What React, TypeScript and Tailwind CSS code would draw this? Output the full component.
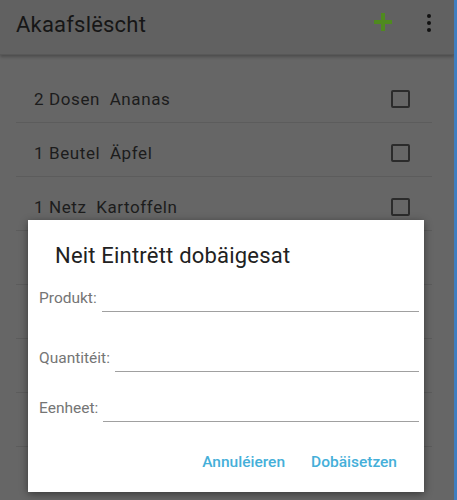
import React from 'react';

// Einkaafslëscht – Dialog "Neit Eintrëtt" iwwer der gedimmter Lëscht
const ITEMS = ['2 Dosen  Ananas', '1 Beutel  Äpfel', '1 Netz  Kartoffeln', '', '', '', ''];

function PlusIcon() {
  return (
    <svg width="20" height="20" viewBox="0 0 20 20">
      <path d="M10 1v18M1 10h18" stroke="#4f8a1f" strokeWidth="4" />
    </svg>
  );
}

function Field({ label, height }: { label: string; height: string }) {
  return (
    <div className={`flex items-end pl-[11px] pr-[5px] ${height}`}>
      <span className="mb-[4px] text-[15.5px] leading-[20px] text-[#757575]">{label}</span>
      <div className="ml-[5px] flex-1 border-b border-[#a0a0a0]" />
    </div>
  );
}

export default function App() {
  return (
    <div className="relative flex h-[500px] w-[457px] overflow-hidden bg-[#666666] font-[Roboto,sans-serif]">
      <div className="flex flex-1 flex-col">
        {/* Toolbar */}
        <header className="flex h-[55px] items-start border-b border-[#585858] bg-[#616161] pl-[16px] pt-[11px] shadow-[0_2px_3px_rgba(0,0,0,0.25)]">
          <h1 className="flex-1 text-[22px] leading-[28px] tracking-[0.2px] text-[#161616]">Akaafslëscht</h1>
          <div className="mr-[34px] mt-[1px]">
            <PlusIcon />
          </div>
          <div className="mr-[23px] mt-[3px] flex flex-col items-center gap-[3px]">
            <span className="h-[4px] w-[4px] rounded-full bg-[#111]" />
            <span className="h-[4px] w-[4px] rounded-full bg-[#111]" />
            <span className="h-[4px] w-[4px] rounded-full bg-[#111]" />
          </div>
        </header>

        {/* Lëscht */}
        <ul className="ml-[16px] mr-[22px] mt-[14px]">
          {ITEMS.map((item, i) => (
            <li
              key={i}
              className="flex h-[54px] items-center border-b border-[#5c5c5c] pl-[18px] pr-[22px] pt-[6px]"
            >
              <span className="flex-1 whitespace-pre text-[17px] leading-[24px] tracking-[0.6px] text-[#1c1c1c]">
                {item}
              </span>
              <span className="h-[18px] w-[19px] rounded-[2px] border-2 border-[#2b2b2b]" />
            </li>
          ))}
        </ul>
      </div>
      <div className="w-[3px] bg-[#3f7ec0]" />

      {/* Dialog */}
      <div className="absolute left-[28px] top-[220px] flex h-[272px] w-[396px] flex-col bg-white shadow-[0_2px_8px_rgba(0,0,0,0.45)]">
        <h2 className="pl-[27px] pt-[22px] text-[22px] leading-[28px] tracking-[0.2px] text-[#212121]">
          Neit Eintrëtt dobäigesat
        </h2>
        <Field label="Produkt:" height="h-[42px]" />
        <Field label="Quantitéit:" height="h-[60px]" />
        <Field label="Eenheet:" height="h-[50px]" />
        <div className="flex justify-end gap-[26px] pr-[27px] pt-[30px]">
          <button className="text-[15.5px] font-medium leading-[20px] text-[#45afd9]">Annuléieren</button>
          <button className="text-[15.5px] font-medium leading-[20px] text-[#45afd9]">Dobäisetzen</button>
        </div>
      </div>
    </div>
  );
}
